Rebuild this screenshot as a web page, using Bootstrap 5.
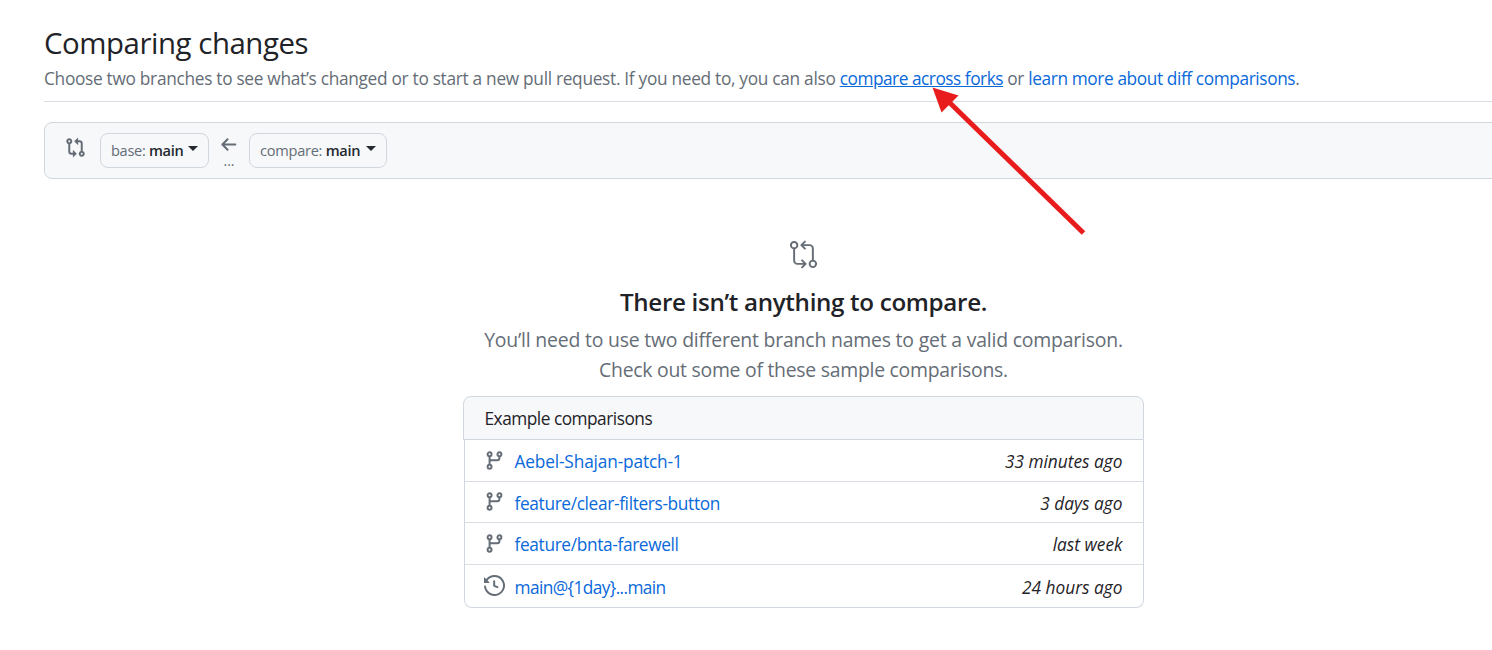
<!DOCTYPE html>
<html lang="en">
<head>
<meta charset="utf-8">
<meta name="viewport" content="width=device-width, initial-scale=1">
<title>Comparing changes</title>
<link href="https://cdn.jsdelivr.net/npm/bootstrap@5.3.0/dist/css/bootstrap.min.css" rel="stylesheet">
<style>
  body { font-family: "Open Sans", "Noto Sans", sans-serif; color: #1f2328; font-size: 17.3px; line-height: 27px; height: 650px; overflow: hidden; }
  a { color: #0969da; text-decoration: none; }
  svg { display: block; flex: none; }
  .page { width: 1519px; margin-left: 44px; padding-top: 23px; }
  .muted { color: #656d76; }
  .page-title { font-size: 29.4px; line-height: 40px; font-weight: 400; margin: 0; letter-spacing: -.45px; }
  .intro { border-bottom: 1px solid #d8dee4; height: 39px; padding-top: 2px; white-space: nowrap; letter-spacing: -.3px; }
  .intro .forks { letter-spacing: -.48px; text-decoration: underline; }
  .intro .learn { letter-spacing: -.4px; }
  .range { height: 57px; margin-top: 20px; padding: 10px 21px 10px 20px; border: 1px solid #d0d7de; border-radius: 8px; background: #f6f8fa; }
  .range-icon { margin-top: 4px; }
  .pick { height: 35px; padding: 0 10px; border: 1px solid #d0d7de; border-radius: 8px; background: #f6f8fa; font-size: 14.6px; line-height: 33px; color: #656d76; letter-spacing: -.2px; white-space: nowrap; }
  .pick b { font-weight: 600; color: #24292f; }
  .pick-base { width: 109px; margin-left: 14px; letter-spacing: -.32px; }
  .pick-compare { width: 138px; letter-spacing: -.27px; }
  .tri { border: 5px solid transparent; border-top-color: #24292f; border-bottom: 0; margin: -5px 0 0 auto; }
  .between { width: 40px; }
  .between svg { margin: 1px 2px 0 0; }
  .dots { font-size: 14px; line-height: 12px; }
  .blank { width: 680px; margin: 60px auto 0; }
  .blank h2 { font-size: 24.2px; line-height: 36px; font-weight: 600; margin: 14px 0 5px; letter-spacing: -.33px; }
  .blank p { font-size: 19.4px; line-height: 30px; margin: 0; letter-spacing: -.19px; }
  .blank .second { letter-spacing: -.26px; }
  .samples { width: 681px; margin: 11px 0 0 -1px; }
  .samples-head { height: 44px; padding: 0 21px; line-height: 44px; border: 1px solid #d0d7de; border-radius: 8px 8px 0 0; background: #f6f8fa; letter-spacing: -.5px; }
  .samples-body { margin-left: 1px; border: 1px solid #d0d7de; border-top: 0; border-radius: 0 0 8px 8px; }
  .item { height: 41.6px; padding: 0 20px 0 19.5px; border-bottom: 1px solid #d8dee4; }
  .item:last-child { border: 0; height: 42px; }
  .item a, .item em { padding-top: 3px; }
  .item a { margin-left: 9.5px; letter-spacing: -.35px; }
  .item .patch { letter-spacing: -.16px; }
  .item .day { letter-spacing: -.6px; }
  .pointer { position: absolute; left: 925px; top: 80px; }
</style>
</head>
<body>
<svg width="0" height="0" class="position-absolute">
  <symbol id="branch" viewBox="0 0 16 16"><g fill="none" stroke="#656d76" stroke-width="1.5"><circle cx="4.25" cy="3.25" r="1.5"/><circle cx="4.25" cy="12.75" r="1.5"/><circle cx="11.75" cy="3.25" r="1.5"/><path d="M4.25 4.75v6.5M11.75 4.75V6A1.75 1.75 0 0 1 10 7.75H4.25"/></g></symbol>
</svg>
<main class="page">
  <h1 class="page-title">Comparing changes</h1>
  <div class="intro muted"><span>Choose two branches to see what’s changed or to start a new pull request. If you need to, you can also </span><a href="#" class="forks">compare across forks</a> or <a href="#" class="learn">learn more about diff comparisons</a>.</div>
  <div class="range d-flex">
    <svg class="range-icon" width="21" height="21" viewBox="0 0 16 16"><path fill="#656d76" d="M9.573.677A.25.25 0 0 1 10 .854V2.5h1A2.5 2.5 0 0 1 13.5 5v5.628a2.251 2.251 0 1 1-1.5 0V5a1 1 0 0 0-1-1h-1v1.646a.25.25 0 0 1-.427.177L7.177 3.427a.25.25 0 0 1 0-.354ZM6 12v-1.646a.25.25 0 0 1 .427-.177l2.396 2.396a.25.25 0 0 1 0 .354l-2.396 2.396A.25.25 0 0 1 6 15.146V13.5H5A2.5 2.5 0 0 1 2.5 11V5.372a2.25 2.25 0 1 1 1.5 0V11a1 1 0 0 0 1 1ZM4 3.25a.75.75 0 1 0-1.5 0 .75.75 0 0 0 1.5 0ZM12.75 12a.75.75 0 1 0 0 1.5.75.75 0 0 0 0-1.5Z"/></svg>
    <button class="pick pick-base d-flex align-items-center"><span>base: <b>main</b></span><i class="tri"></i></button>
    <div class="between muted d-flex flex-column align-items-center">
      <svg width="21" height="21" viewBox="0 0 16 16"><path fill="none" stroke="#656d76" stroke-width="1.5" stroke-linecap="round" stroke-linejoin="round" d="M7.3 4 3.3 8l4 4M3.5 8h9.7"/></svg>
      <span class="dots">...</span>
    </div>
    <button class="pick pick-compare d-flex align-items-center"><span>compare: <b>main</b></span><i class="tri"></i></button>
  </div>
  <section class="blank text-center">
    <svg class="mx-auto" width="31" height="31" viewBox="0 0 24 24"><g fill="none" stroke="#656d76" stroke-width="1.5" stroke-linecap="round" stroke-linejoin="round"><circle cx="4.75" cy="4.75" r="2.5"/><circle cx="19.25" cy="19.25" r="2.5"/><path d="M4.75 7.25v9.5a2.5 2.5 0 0 0 2.5 2.5h6M10.9 16.5l2.75 2.75L10.9 22M19.25 16.75v-9.5a2.5 2.5 0 0 0-2.5-2.5h-6M13.1 2l-2.75 2.75L13.1 7.5"/></g></svg>
    <h2>There isn’t anything to compare.</h2>
    <p class="muted">You’ll need to use two different branch names to get a valid comparison.<br><span class="second">Check out some of these sample comparisons.</span></p>
    <div class="samples text-start">
      <div class="samples-head">Example comparisons</div>
      <div class="samples-body">
        <div class="item d-flex align-items-center"><svg width="21" height="21"><use href="#branch"/></svg><a href="#" class="patch me-auto">Aebel-Shajan-patch-1</a><em>33 minutes ago</em></div>
        <div class="item d-flex align-items-center"><svg width="21" height="21"><use href="#branch"/></svg><a href="#" class="me-auto">feature/clear-filters-button</a><em>3 days ago</em></div>
        <div class="item d-flex align-items-center"><svg width="21" height="21"><use href="#branch"/></svg><a href="#" class="me-auto">feature/bnta-farewell</a><em>last week</em></div>
        <div class="item d-flex align-items-center"><svg width="21" height="21" viewBox="0 0 16 16"><path fill="#656d76" d="m.427 1.927 1.215 1.215a8.002 8.002 0 1 1-1.6 5.685.75.75 0 1 1 1.493-.154 6.5 6.5 0 1 0 1.18-4.458l1.358 1.358A.25.25 0 0 1 3.896 6H.25A.25.25 0 0 1 0 5.75V2.104a.25.25 0 0 1 .427-.177ZM7.75 4a.75.75 0 0 1 .75.75v2.992l2.028.812a.75.75 0 0 1-.557 1.392l-2.5-1A.751.751 0 0 1 7 8.25v-3.5A.75.75 0 0 1 7.75 4Z"/></svg><a href="#" class="day me-auto">main@{1day}...main</a><em>24 hours ago</em></div>
      </div>
    </div>
  </section>
</main>
<svg class="pointer" width="165" height="160" viewBox="925 80 165 160"><path d="M950 103 1083.500 233" stroke="#e81c1c" stroke-width="5"/><path fill="#e81c1c" d="M932.500 87.500 958.500 95.500 941.500 112.500Z"/></svg>
<script src="https://cdn.jsdelivr.net/npm/bootstrap@5.3.0/dist/js/bootstrap.bundle.min.js"></script>
</body>
</html>
